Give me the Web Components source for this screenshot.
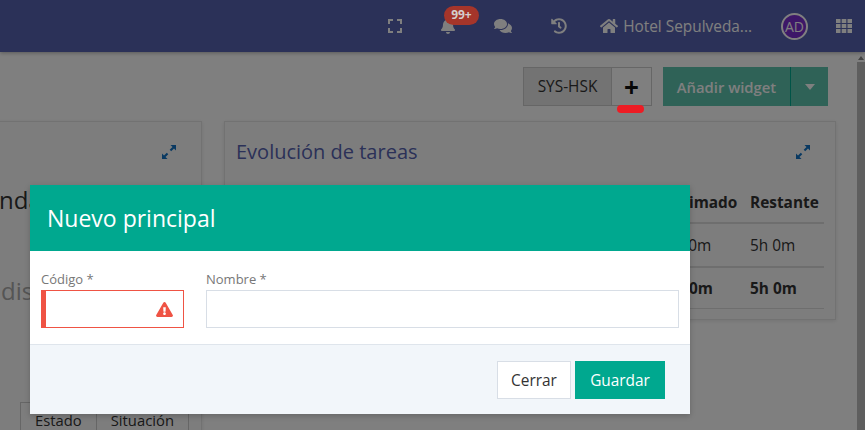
<!DOCTYPE html>
<html lang="es">
<head>
<meta charset="utf-8">
<title>Nuevo principal</title>
<style>
  html, body {margin: 0; height: 100%; overflow: hidden; background: #fff}
  body {font-family: "Open Sans", "Liberation Sans", sans-serif; color: #333}
</style>
</head>
<body>
<app-page>
  <top-nav></top-nav>
  <dash-toolbar></dash-toolbar>
  <dash-board></dash-board>
  <new-modal slot="modal"></new-modal>
</app-page>

<script>
const ICONS = {
  bell: ['0 0 448 512', 'M224 512c35.32 0 63.97-28.65 63.97-64H160.03c0 35.35 28.65 64 63.97 64zm215.39-149.71c-19.32-20.76-55.47-51.99-55.47-154.29 0-77.7-54.48-139.9-127.94-155.16V32c0-17.67-14.32-32-31.98-32s-31.98 14.33-31.98 32v20.84C118.56 68.1 64.08 130.3 64.08 208c0 102.3-36.15 133.53-55.47 154.29-6 6.45-8.66 14.16-8.61 21.71.11 16.4 12.98 32 32.1 32h383.8c19.12 0 32-15.6 32.1-32 .05-7.55-2.61-15.27-8.61-21.71z'],
  comments: ['0 0 576 512', 'M416 192c0-88.4-93.1-160-208-160S0 103.6 0 192c0 34.3 14.1 65.9 38 92-13.4 30.2-35.5 54.2-35.8 54.5-2.2 2.3-2.8 5.7-1.5 8.7S4.8 352 8 352c36.6 0 66.9-12.3 88.7-25 32.2 15.7 70.3 25 111.3 25 114.9 0 208-71.6 208-160zm122 220c23.9-26 38-57.7 38-92 0-66.9-53.5-124.2-129.3-148.1.9 6.6 1.3 13.3 1.3 20.1 0 105.9-107.7 192-240 192-10.8 0-21.3-.8-31.7-1.9C207.8 439.6 281.8 480 368 480c41 0 79.1-9.2 111.3-25 21.8 12.7 52.1 25 88.7 25 3.2 0 6.1-1.9 7.3-4.8 1.3-2.9.7-6.3-1.5-8.7-.3-.3-22.4-24.2-35.8-54.5z'],
  history: ['0 0 512 512', 'M504 255.531c.253 136.64-111.18 248.372-247.82 248.468-59.015.042-113.223-20.53-155.822-54.911-11.077-8.94-11.905-25.541-1.839-35.607l11.267-11.267c8.609-8.609 22.353-9.551 31.891-1.984C173.062 425.135 212.781 440 256 440c101.705 0 184-82.311 184-184 0-101.705-82.311-184-184-184-48.814 0-93.149 18.969-126.068 49.932l50.754 50.754c10.08 10.08 2.941 27.314-11.313 27.314H24c-8.837 0-16-7.163-16-16V38.627c0-14.254 17.234-21.393 27.314-11.314l49.372 49.372C129.209 34.136 189.552 8 256 8c136.81 0 247.747 110.78 248 247.531zm-180.912 78.784l9.823-12.63c8.138-10.463 6.253-25.542-4.21-33.679L288 256.349V152c0-13.255-10.745-24-24-24h-16c-13.255 0-24 10.745-24 24v135.651l65.409 50.874c10.463 8.137 25.541 6.253 33.679-4.21z'],
  home: ['0 0 576 512', 'M280.37 148.26L96 300.11V464a16 16 0 0 0 16 16l112.06-.29a16 16 0 0 0 15.92-16V368a16 16 0 0 1 16-16h64a16 16 0 0 1 16 16v95.64a16 16 0 0 0 16 16.05L464 480a16 16 0 0 0 16-16V300L295.67 148.26a12.19 12.19 0 0 0-15.3 0zM571.6 251.47L488 182.56V44.05a12 12 0 0 0-12-12h-56a12 12 0 0 0-12 12v72.61L318.47 43a48 48 0 0 0-61 0L4.34 251.47a12 12 0 0 0-1.6 16.9l25.5 31A12 12 0 0 0 45.15 301l235.22-193.74a12.19 12.19 0 0 1 15.3 0L530.9 301a12 12 0 0 0 16.9-1.6l25.5-31a12 12 0 0 0-1.7-16.93z'],
  warn: ['0 0 576 512', 'M569.517 440.013C587.975 472.007 564.806 512 527.94 512H48.054c-36.937 0-59.999-40.055-41.577-71.987L246.423 24.028c18.467-32.009 64.72-31.951 83.154 0l239.94 416.005zM288 354c-25.405 0-46 20.595-46 46s20.595 46 46 46 46-20.595 46-46-20.595-46-46-46zm-43.673-165.346l7.418 136c.347 6.364 5.609 11.346 11.982 11.346h48.546c6.373 0 11.635-4.982 11.982-11.346l7.418-136c.375-6.874-5.098-12.654-11.982-12.654h-63.383c-6.884 0-12.356 5.78-11.981 12.654z']
};
const icon = (name, w, h) => `<svg width="${w}" height="${h}" viewBox="${ICONS[name][0]}" fill="currentColor"><path d="${ICONS[name][1]}"/></svg>`;

// fullscreen corners, drawn in the top bar
const FULLSCREEN = `<svg width="14" height="14" viewBox="0 0 14 14" fill="none" stroke="currentColor" stroke-width="2"><path d="M1 5V1h4M9 1h4v4M13 9v4H9M5 13H1V9"/></svg>`;
const GRID = `<svg width="16" height="14" viewBox="0 0 16 14" fill="currentColor"><path d="M0 0h4.5v4H0zM5.7 0h4.6v4H5.700zM11.500 0H16v4h-4.500zM0 5h4.500v4H0zM5.700 5h4.600v4H5.700zM11.500 5H16v4h-4.500zM0 10h4.500v4H0zM5.700 10h4.600v4H5.700zM11.500 10H16v4h-4.500z"/></svg>`;
const EXPAND = `<svg width="14" height="14" viewBox="0 0 14 14" fill="currentColor"><path d="M8.500 0H14v5.500l-2-2L9.200 6.300 7.700 4.800 10.500 2zM0 8.500l2 2 2.800-2.800 1.500 1.500L3.500 12l2 2H0z"/></svg>`;

class AppPage extends HTMLElement {
  constructor() {
    super();
    this.attachShadow({mode: 'open'}).innerHTML = `
    <style>
      :host {display: flex; position: relative; width: 865px; height: 430px; overflow: hidden; background: #fff}
      .main {flex: 1; min-width: 0; display: flex; flex-direction: column}
      .scroll {width: 8px; display: flex; flex-direction: column; background: #fff}
      .scroll .gap {height: 62px; display: flex; justify-content: center; align-items: flex-end; padding-bottom: 2px; box-sizing: border-box}
      .scroll .gap i {border: 3px solid transparent; border-bottom: 4px solid #888; border-top: 0}
      .scroll .thumb {flex: 1; background: #bcbcbc}
      .dim {position: absolute; inset: 0; background: rgba(0,0,0,.5)}
      .mark {position: absolute; left: 617px; top: 105px; width: 27px; height: 8px; border-radius: 4px; background: #ed1c24}
      ::slotted([slot=modal]) {position: absolute; left: 30px; top: 185px}
    </style>
    <div class="main"><slot></slot></div>
    <div class="scroll"><div class="gap"><i></i></div><div class="thumb"></div></div>
    <div class="dim"></div>
    <slot name="modal"></slot>
    <div class="mark"></div>`;
  }
}

class TopNav extends HTMLElement {
  constructor() {
    super();
    this.attachShadow({mode: 'open'}).innerHTML = `
    <style>
      :host {display: flex; align-items: center; justify-content: flex-end; height: 52px; flex: none; margin-right: -8px;
        background: #5763b0; color: #fff; font-size: 15.4px; box-shadow: 0 1px 4px rgba(0,0,0,.3); position: relative}
      .item {display: flex; align-items: center; position: relative}
      svg {display: block}
      .fs {margin-right: 39px}
      .bell {margin-right: 39px}
      /* the badge stays above the page dimmer, so it keeps its own muted colours */
      .badge {position: absolute; left: 3px; top: -12px; padding: 0 7px; height: 19px; line-height: 18px; border-radius: 10px;
        background: #a5352a; color: #d4d0cf; font-size: 12px; font-weight: 700; white-space: nowrap; z-index: 2}
      .chat {margin-right: 39px}
      .hist {margin-right: 33px}
      .hotel {gap: 5px; margin-right: 29px}
      .avatar {width: 23px; height: 23px; border: 2px solid #fff; border-radius: 50%; background: #7b2fd0;
        display: flex; align-items: center; justify-content: center; font-size: 14px; margin-right: 28px}
      .apps {margin-right: 13px}
    </style>
    <div class="item fs">${FULLSCREEN}</div>
    <div class="item bell">${icon('bell', 14, 16)}<span class="badge">99+</span></div>
    <div class="item chat">${icon('comments', 18, 16)}</div>
    <div class="item hist">${icon('history', 16, 16)}</div>
    <div class="item hotel">${icon('home', 18, 16)}<span>Hotel Sepulveda...</span></div>
    <div class="avatar">AD</div>
    <div class="item apps">${GRID}</div>`;
  }
}

class DashToolbar extends HTMLElement {
  constructor() {
    super();
    this.attachShadow({mode: 'open'}).innerHTML = `
    <style>
      :host {display: flex; justify-content: flex-end; flex: none; padding: 15px 29px 0 0; gap: 11px; font-size: 15.4px}
      .group {display: flex; height: 39px; box-sizing: border-box; border: 1px solid #ccc}
      .name {width: 87px; display: flex; align-items: center; justify-content: center; background: #e6e6e6; color: #333; border-right: 1px solid #ccc}
      .plus {width: 39px; display: flex; align-items: center; justify-content: center; color: #111; font-size: 26px; font-weight: 700; background: #fff}
      .add {display: flex; height: 39px; background: #5ec4ae; color: #fff; font-weight: 600; font-size: 14.8px}
      .label {width: 127px; display: flex; align-items: center; justify-content: center; border-right: 1px solid #00a88f}
      .caret {flex: 1; width: 37px; display: flex; align-items: center; justify-content: center}
      .caret i {border: 5px solid transparent; border-top: 6px solid #fff; border-bottom: 0}
    </style>
    <div class="group"><div class="name">SYS-HSK</div><div class="plus">+</div></div>
    <div class="add"><div class="label">Añadir widget</div><div class="caret"><i></i></div></div>`;
  }
}

class DashCard extends HTMLElement {
  constructor() {
    super();
    this.attachShadow({mode: 'open'}).innerHTML = `
    <style>
      :host {display: block; position: relative; box-sizing: border-box; background: #fbfbfb; border: 1px solid #e4e4e4;
        box-shadow: 0 1px 4px rgba(0,0,0,.1); padding: 16px 11px 15px}
      h3 {margin: 0; font-size: 20px; font-weight: 400; color: #5763b0; line-height: 27px; height: 27px}
      .expand {position: absolute; right: 25px; top: 23px; color: #1273c4; line-height: 0}
    </style>
    <h3><slot name="title"></slot></h3>
    <div class="expand">${EXPAND}</div>
    <slot></slot>`;
  }
}

class TaskTable extends HTMLElement {
  constructor() {
    super();
    this.attachShadow({mode: 'open'}).innerHTML = `
    <style>
      :host {display: block; margin: 22px 0 0; font-size: 15.4px; color: #333}
      .row {display: grid; grid-template-columns: 1fr 84px 74px; align-items: center; box-sizing: border-box}
      .head {height: 37px; border-bottom: 2px solid #ddd; font-weight: 700; padding-bottom: 4px}
      .line {height: 44px; border-bottom: 2px solid #ddd; padding-top: 1px}
      .total {height: 41px; border-bottom: 1px solid #ddd; font-weight: 700}
    </style>
    <div class="row head"><span></span><span>Estimado</span><span>Restante</span></div>
    <div class="row line"><span></span><span>5h 0m</span><span>5h 0m</span></div>
    <div class="row total"><span></span><span>5h 0m</span><span>5h 0m</span></div>`;
  }
}

class TabStrip extends HTMLElement {
  constructor() {
    super();
    this.attachShadow({mode: 'open'}).innerHTML = `
    <style>
      :host {display: flex; font-size: 14.8px; color: #333; height: 28px; line-height: 17px}
      span {border: 1px solid #ccc; border-bottom: 0; padding: 9px 14px 0; box-sizing: border-box}
      span + span {border-left: 0}
    </style>
    <span>Estado</span><span>Situación</span>`;
  }
}

class DashBoard extends HTMLElement {
  constructor() {
    super();
    this.attachShadow({mode: 'open'}).innerHTML = `
    <style>
      :host {display: grid; grid-template-columns: 403px 612px; gap: 22px; margin: 15px 0 0 -201px; align-items: start}
      .big {font-size: 24px; color: #333; line-height: 34px; white-space: nowrap}
      .one {margin: 18px 0 0 199px}
      .two {margin: 57px 0 0 201px; color: #aaa}
      .left {height: 400px; padding-left: 0; padding-right: 0}
      tab-strip {margin: 94px 0 0 220px; width: 170px}
      .evo {height: 199px}
    </style>
    <dash-card class="left">
      <div class="big one">nda</div>
      <div class="big two">dis</div>
      <tab-strip></tab-strip>
    </dash-card>
    <dash-card class="evo">
      <span slot="title">Evolución de tareas</span>
      <task-table></task-table>
    </dash-card>`;
  }
}

class FormField extends HTMLElement {
  constructor() {
    super();
    const bad = this.hasAttribute('invalid');
    this.attachShadow({mode: 'open'}).innerHTML = `
    <style>
      :host {display: block}
      label {display: block; font-size: 13px; line-height: 17px; color: #777; margin-bottom: 2px}
      .box {height: 38px; box-sizing: border-box; display: flex; align-items: center; justify-content: flex-end;
        border: 1px solid ${bad ? '#ef5344' : '#d8dee6'}; ${bad ? 'border-left: 5px solid #ef5344; padding-right: 10px;' : ''}
        color: #ef5344; background: #fff}
      svg {display: block}
    </style>
    <label>${this.getAttribute('label')}</label>
    <div class="box">${bad ? icon('warn', 17, 15) : ''}</div>`;
  }
}

class NewModal extends HTMLElement {
  constructor() {
    super();
    this.attachShadow({mode: 'open'}).innerHTML = `
    <style>
      :host {display: block; width: 660px; background: #fff; box-shadow: 0 2px 6px rgba(0,0,0,.2)}
      header {height: 66px; display: flex; align-items: center; padding-left: 17px; background: #00a88f; color: #fff; font-size: 23px}
      .body {display: grid; grid-template-columns: 143px 1fr; gap: 22px; padding: 20px 11px 16px; height: 94px; box-sizing: border-box; border-bottom: 1px solid #dfe5ec}
      footer {height: 69px; box-sizing: border-box; background: #f2f6fa; display: flex; justify-content: flex-end; gap: 4px; padding: 16px 25px 0 0}
      button {font: inherit; font-size: 15.4px; height: 38px; padding: 0; border-radius: 0}
      .close {width: 74px; background: #fff; border: 1px solid #d8dee6; color: #333}
      .save {width: 90px; background: #00a88f; border: 1px solid #00a88f; color: #fff}
    </style>
    <header>Nuevo principal</header>
    <div class="body">
      <form-field label="Código *" invalid></form-field>
      <form-field label="Nombre *"></form-field>
    </div>
    <footer><button class="close">Cerrar</button><button class="save">Guardar</button></footer>`;
  }
}

customElements.define('form-field', FormField);
customElements.define('new-modal', NewModal);
customElements.define('task-table', TaskTable);
customElements.define('tab-strip', TabStrip);
customElements.define('dash-card', DashCard);
customElements.define('dash-board', DashBoard);
customElements.define('dash-toolbar', DashToolbar);
customElements.define('top-nav', TopNav);
customElements.define('app-page', AppPage);
</script>
</body>
</html>
